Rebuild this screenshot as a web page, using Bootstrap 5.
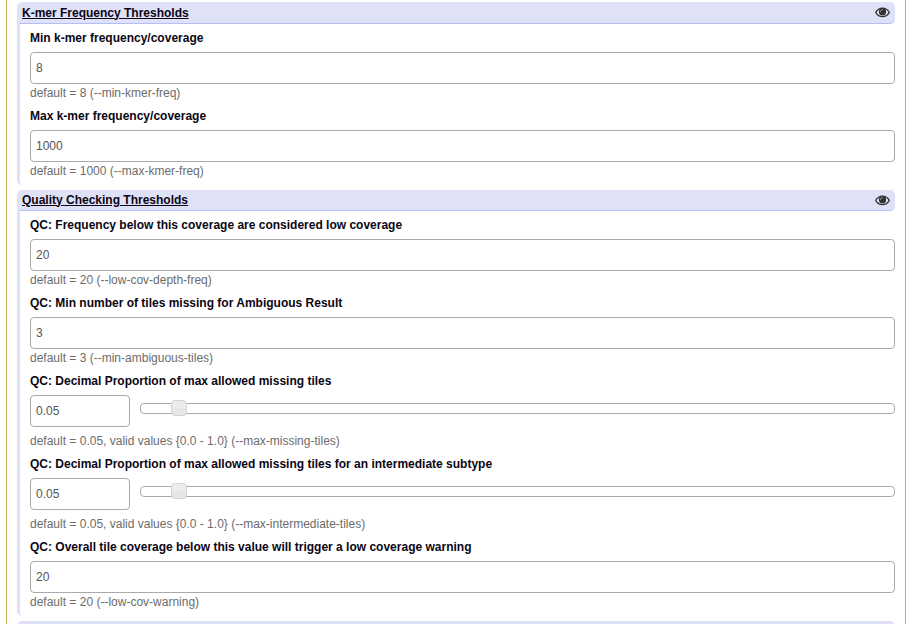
<!DOCTYPE html>
<html lang="en">
<head>
<meta charset="utf-8">
<title>Thresholds</title>
<link href="https://cdn.jsdelivr.net/npm/bootstrap@5.3.0/dist/css/bootstrap.min.css" rel="stylesheet">
<style>
body{font:12px/18px "Liberation Sans",Arial,sans-serif;color:#000;background:#fff}
.page{height:624px;margin:0 3px 0 6px;border:solid #c9ae5d;border-width:0 1px;padding:2px 10px 0}
.sect{border-left:3px solid #dfe1f7;border-radius:5px;margin-bottom:5px}
.sect-head{height:21px;padding:0 5px 0 2px;background:#dfe1f7;border-bottom:1px solid #b4bef5;border-radius:0 5px 5px 0;border-top-left-radius:2px 5px;color:#0b0613}
.sect-head.tall{height:22px}
.sect-head:not(.tall) .sect-title{padding-bottom:1px}
.sect-title{font-weight:700;text-decoration:underline}
.sect-body{padding:5px 0 0 10px}
.field{padding-bottom:5px}
.field label{display:block;font-weight:700;margin-bottom:5px;color:#0b0613}
.field .form-control{height:32px;padding:0 5px;font-size:12px;line-height:18px;color:#555;border:1px solid #aaa;border-radius:4px}
.field .num{width:100px;flex:none}
.hint{color:#6c6c6c}
.slider-row{gap:10px;margin-bottom:5px}
.track{height:11px;margin-top:8px;border:1px solid #aaa;border-radius:4px;background:#fff}
.thumb{position:absolute;top:-4px;width:16px;height:16px;border:1px solid #d3d3d3;border-radius:4px;background:linear-gradient(#ececec 50%,#e6e6e6 50%)}
</style>
</head>
<body class="overflow-hidden">
<svg class="d-none"><symbol id="eye" viewBox="0 0 15 11"><path fill="#fff" fill-opacity=".45" d="M.7 5.500C4 .2 11 .2 14.300 5.500 11 10.800 4 10.800.7 5.500z"/><path fill="none" stroke="#333" stroke-width="1.300" d="M.7 5.300C4-.4 11-.4 14.300 5.300 11 11 4 11 .7 5.300z"/><circle cx="7.500" cy="4.700" r="3.700" fill="#333"/><path fill="none" stroke="#aaa" stroke-width=".8" stroke-linecap="round" d="M5.400 4.700c0-1.200.9-2.100 2.100-2.100"/></symbol></svg>
<main class="page">
<section class="sect">
<header class="sect-head tall d-flex justify-content-between align-items-center"><span class="sect-title">K-mer Frequency Thresholds</span><svg width="15" height="11"><use href="#eye"/></svg></header>
<div class="sect-body">
<div class="field"><label for="a">Min k-mer frequency/coverage</label><input id="a" class="form-control" value="8"><div class="hint">default = 8 (--min-kmer-freq)</div></div>
<div class="field"><label for="b">Max k-mer frequency/coverage</label><input id="b" class="form-control" value="1000"><div class="hint">default = 1000 (--max-kmer-freq)</div></div>
</div>
</section>
<section class="sect">
<header class="sect-head d-flex justify-content-between align-items-center"><span class="sect-title">Quality Checking Thresholds</span><svg width="15" height="11"><use href="#eye"/></svg></header>
<div class="sect-body">
<div class="field"><label for="c">QC: Frequency below this coverage are considered low coverage</label><input id="c" class="form-control" value="20"><div class="hint">default = 20 (--low-cov-depth-freq)</div></div>
<div class="field"><label for="d">QC: Min number of tiles missing for Ambiguous Result</label><input id="d" class="form-control" value="3"><div class="hint">default = 3 (--min-ambiguous-tiles)</div></div>
<div class="field"><label for="e">QC: Decimal Proportion of max allowed missing tiles</label><div class="slider-row d-flex"><input id="e" class="form-control num" value="0.05"><div class="track position-relative flex-grow-1"><span class="thumb" style="left:calc(5% - 8px)"></span></div></div><div class="hint">default = 0.05, valid values {0.0 - 1.0} (--max-missing-tiles)</div></div>
<div class="field"><label for="f">QC: Decimal Proportion of max allowed missing tiles for an intermediate subtype</label><div class="slider-row d-flex"><input id="f" class="form-control num" value="0.05"><div class="track position-relative flex-grow-1"><span class="thumb" style="left:calc(5% - 8px)"></span></div></div><div class="hint">default = 0.05, valid values {0.0 - 1.0} (--max-intermediate-tiles)</div></div>
<div class="field"><label for="g">QC: Overall tile coverage below this value will trigger a low coverage warning</label><input id="g" class="form-control" value="20"><div class="hint">default = 20 (--low-cov-warning)</div></div>
</div>
</section>
<section class="sect"><header class="sect-head"></header></section>
</main>
</body>
</html>
